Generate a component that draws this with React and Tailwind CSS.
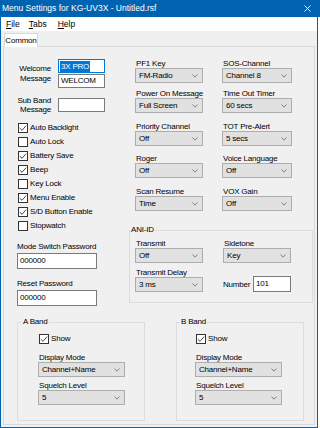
import React from 'react'

const rows = [
  { mt: 'mt-0', a: ['PF1 Key', 'FM-Radio'], b: ['SOS-Channel', 'Channel 8'] },
  { mt: 'mt-[6px]', a: ['Power On Message', 'Full Screen'], b: ['Time Out Timer', '60 secs'] },
  { mt: 'mt-[9px]', a: ['Priority Channel', 'Off'], b: ['TOT Pre-Alert', '5 secs'] },
  { mt: 'mt-[8px]', a: ['Roger', 'Off'], b: ['Voice Language', 'Off'] },
  { mt: 'mt-[9px]', a: ['Scan Resume', 'Time'], b: ['VOX Gain', 'Off'] },
]

const checks = [
  ['Auto Backlight', true],
  ['Auto Lock', false],
  ['Battery Save', true],
  ['Beep', true],
  ['Key Lock', false],
  ['Menu Enable', true],
  ['S/D Button Enable', true],
  ['Stopwatch', false],
]

function Select({ value, width }) {
  return (
    <div className={`h-[15px] ${width} bg-[#e1e1e1] border border-[#adadad] flex items-center justify-between pl-[3px] pr-[4px]`}>
      <span className="leading-none">{value}</span>
      <svg width="6" height="4" viewBox="0 0 6 4">
        <path d="M0.5 0.5 L3 3.2 L5.5 0.5" fill="none" stroke="#6b6b6b" strokeWidth="0.8" />
      </svg>
    </div>
  )
}

function Field({ label, value, width }) {
  return (
    <div className="flex flex-col">
      <span className="leading-[9px] h-[9px] pl-[1px] whitespace-nowrap">{label}</span>
      <Select value={value} width={width} />
    </div>
  )
}

function Check({ checked, label, className = '' }) {
  return (
    <div className={`flex items-center h-[14px] ${className}`}>
      <div className="w-[10px] h-[10px] border border-[#333333] bg-white flex items-center justify-center">
        {checked && (
          <svg width="8" height="8" viewBox="0 0 8 8">
            <path d="M0.8 4.2 L3 6.3 L7.2 1.6" fill="none" stroke="#333333" strokeWidth="0.9" />
          </svg>
        )}
      </div>
      <span className="ml-[2px] leading-none whitespace-nowrap">{label}</span>
    </div>
  )
}

function Band({ title, legendMl, pl, className }) {
  return (
    <fieldset className={`w-[128px] border border-[#dcdcdc] ${className}`}>
      <legend className={`${legendMl} px-[1px] leading-[10px]`}>{title}</legend>
      <div className={`flex flex-col ${pl} pt-[5px] pb-[15px]`}>
        <Check checked label="Show" className="ml-[1px]" />
        <span className="mt-[7px] leading-[9px] h-[9px] pl-[1px]">Display Mode</span>
        <Select value="Channel+Name" width="w-[87px]" />
        <span className="mt-[4px] leading-[9px] h-[9px] pl-[1px]">Squelch Level</span>
        <Select value="5" width="w-[87px]" />
      </div>
    </fieldset>
  )
}

export default function App() {
  return (
    <div className="w-[320px] h-[428px] bg-white overflow-hidden text-[8px] tracking-[-0.2px] text-black font-['Liberation_Sans',Arial,sans-serif]">
      {/* Title bar */}
      <div className="h-[17px] bg-[#0063b1] flex items-center justify-between pl-[2px] pr-[9px]">
        <span className="text-white text-[8.5px] tracking-normal leading-none">Menu Settings for KG-UV3X - Untitled.rsf</span>
        <svg width="7" height="7" viewBox="0 0 7 7">
          <path d="M0.5 0.5 L6.5 6.5 M6.5 0.5 L0.5 6.5" stroke="white" strokeWidth="0.9" />
        </svg>
      </div>

      <div className="w-[318px] h-[411px] border-x border-b border-[#0063b1] bg-[#f0f0f0] flex flex-col">
        {/* Menu bar */}
        <div className="shrink-0 h-[14px] bg-white flex items-center text-[8.5px] tracking-normal leading-none pl-[5px]">
          <span><u>F</u>ile</span>
          <span className="ml-[9px]"><u>T</u>abs</span>
          <span className="ml-[11px]"><u>H</u>elp</span>
        </div>

        {/* Tabs */}
        <div className="shrink-0 h-[15px] flex items-end pl-[3px]">
          <div className="relative z-10 -mb-px h-[14px] w-[34px] bg-white border border-b-0 border-[#d9d9d9] flex items-center justify-center leading-none">
            Common
          </div>
        </div>

        {/* Tab page */}
        <div className="ml-[2px] w-[312px] mb-[2px] flex-1 min-h-0 border border-[#d9d9d9] flex flex-col">
          <div className="flex pt-[12px]">
            {/* Left column */}
            <div className="ml-[13px] w-[88px] mr-[24px] flex flex-col">
              <div className="flex items-center">
                <div className="w-[34px] mr-[7px] text-right whitespace-nowrap leading-[10px]">Welcome<br />Message</div>
                <div className="flex flex-col gap-[1px]">
                  <div className="w-[47px] h-[14px] bg-white border border-[#0078d7] flex items-center pl-[1px]">
                    <span className="bg-[#0078d7] text-white leading-[11px] px-[1px]">3X PRO</span>
                  </div>
                  <div className="w-[47px] h-[14px] bg-white border border-[#7a7a7a] flex items-center pl-[2px] leading-none">
                    WELCOM
                  </div>
                </div>
              </div>
              <div className="flex items-center h-[14px] mt-[10px]">
                <div className="w-[34px] mr-[7px] text-right whitespace-nowrap leading-[9px]">Sub Band<br />Message</div>
                <div className="w-[47px] h-[14px] bg-white border border-[#7a7a7a]" />
              </div>
              <div className="flex flex-col mt-[9px] ml-[1px]">
                {checks.map(([label, on]) => (
                  <Check key={label} checked={on} label={label} />
                ))}
              </div>
              <span className="mt-[9px] leading-[10px] whitespace-nowrap">Mode Switch Password</span>
              <div className="mt-[1px] w-[80px] h-[16px] bg-white border border-[#7a7a7a] flex items-center pl-[2px] leading-none">000000</div>
              <span className="mt-[10px] leading-[10px]">Reset Password</span>
              <div className="mt-[1px] w-[80px] h-[16px] bg-white border border-[#7a7a7a] flex items-center pl-[2px] leading-none">000000</div>
            </div>

            {/* Right part */}
            <div className="w-[184px] flex flex-col">
              <div className="pl-[6px] flex flex-col">
                {rows.map((r) => (
                  <div key={r.a[0]} className={`flex gap-[19px] ${r.mt}`}>
                    <Field label={r.a[0]} value={r.a[1]} width="w-[68px]" />
                    <Field label={r.b[0]} value={r.b[1]} width="w-[70px]" />
                  </div>
                ))}
              </div>

              <fieldset className="mt-[14px] border border-[#dcdcdc]">
                <legend className="ml-[0px] px-[1px] leading-[10px]">ANI-ID</legend>
                <div className="pl-[5px] pt-[4px] pb-[10px] flex flex-col">
                  <div className="flex gap-[20px]">
                    <Field label="Transmit" value="Off" width="w-[68px]" />
                    <Field label="Sidetone" value="Key" width="w-[68px]" />
                  </div>
                  <div className="flex gap-[20px] mt-[5px]">
                    <Field label="Transmit Delay" value="3 ms" width="w-[68px]" />
                    <div className="flex items-end">
                      <span className="leading-[15px] w-[30px]">Number</span>
                      <div className="w-[38px] h-[16px] bg-white border border-[#7a7a7a] flex items-center pl-[2px] leading-none">101</div>
                    </div>
                  </div>
                </div>
              </fieldset>
            </div>
          </div>

          {/* Bands */}
          <div className="flex mt-[11px]">
            <Band title="A Band" legendMl="ml-[4px]" pl="pl-[20px]" className="ml-[13px]" />
            <Band title="B Band" legendMl="ml-[3px]" pl="pl-[18px]" className="ml-[31px]" />
          </div>
        </div>
      </div>
    </div>
  )
}
